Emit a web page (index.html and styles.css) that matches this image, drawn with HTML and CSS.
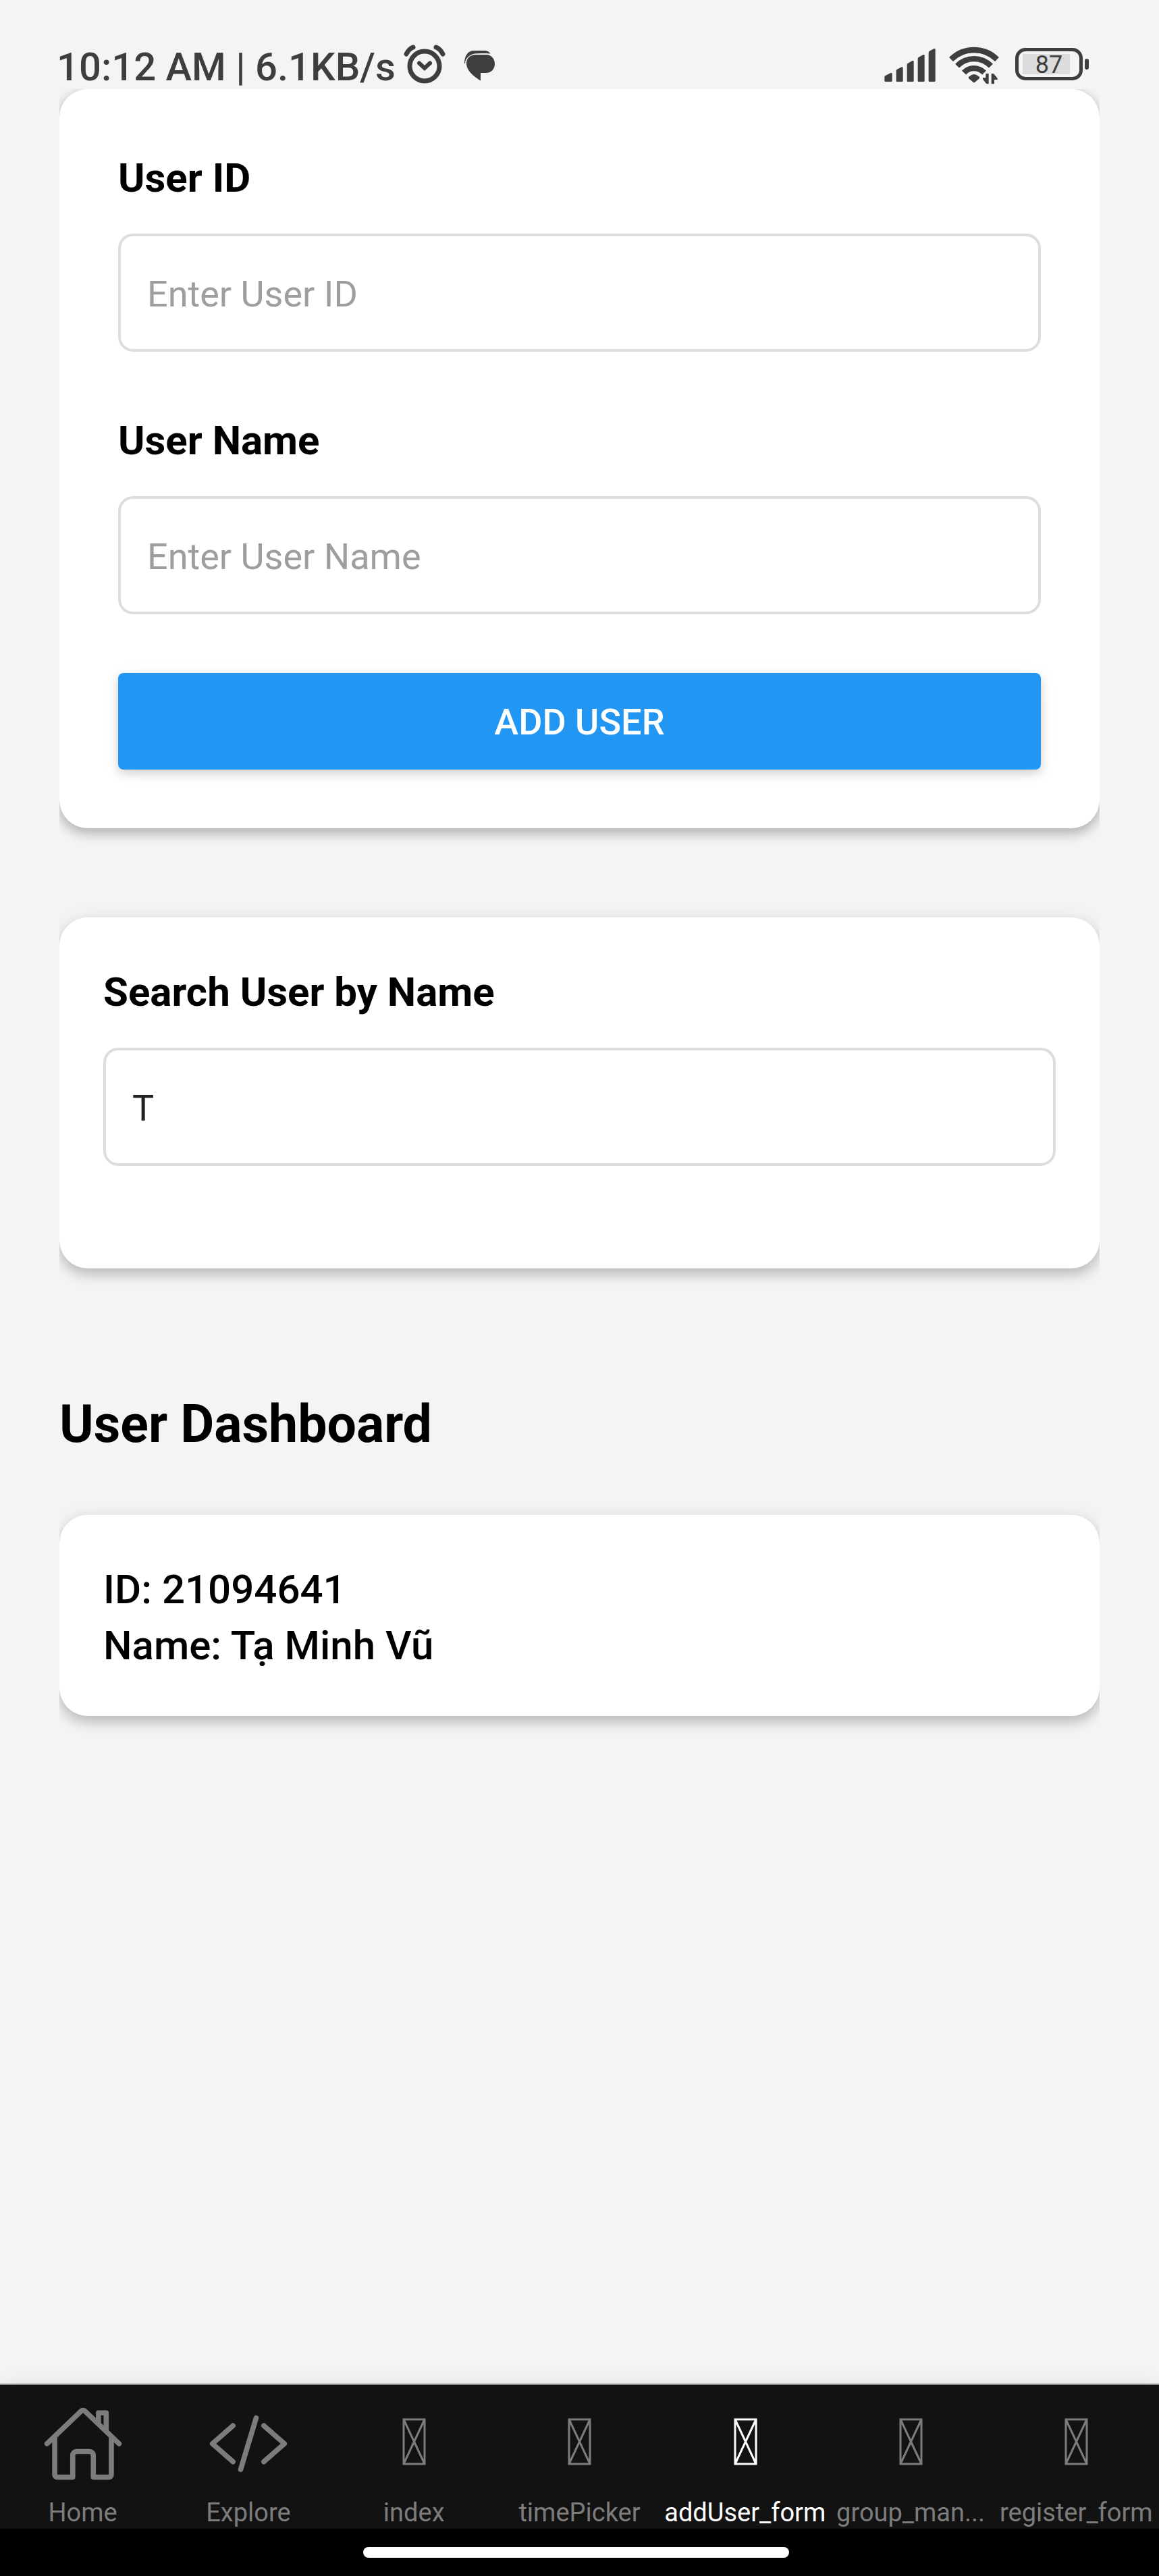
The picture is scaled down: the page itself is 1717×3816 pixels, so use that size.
FILE: index.html
```html
<!DOCTYPE html>
<html lang="en">
<head>
<meta charset="utf-8">
<meta name="viewport" content="width=device-width, initial-scale=1">
<title>Add User</title>
<link rel="stylesheet" href="styles.css">
</head>
<body>
<div class="screen">
  <header class="status">
    <div class="status-group status-left">
      <span class="clock">10:12 AM | 6.1KB/s</span>
      <svg class="icon-alarm" viewBox="0 0 62 58" aria-hidden="true">
        <g fill="none" stroke="currentColor" stroke-linecap="round">
          <circle cx="31" cy="32" r="22" stroke-width="7"/>
          <path d="M23 27.500l8 7.500 8-7.500" stroke-width="6"/>
          <path d="M4 14C6 10 9 6 14 4M58 14C56 10 53 6 48 4" stroke-width="7"/>
        </g>
      </svg>
      <svg class="icon-chat" viewBox="0 0 46 46" aria-hidden="true">
        <path fill="currentColor" d="M17 6h15c8 0 13 6 13 13.500S40 33 32 33h-8v11.500C15 39 3 30 3 19 3 11 9 6 17 6z"/>
        <path fill="currentColor" d="M0 19C0 8 5 0 14 0h15c5 0 8 2 9.500 4.500C28 3.500 21 4 15 4.500 7 6 1 12 1 19z"/>
      </svg>
    </div>
    <div class="status-group status-right">
      <svg class="icon-signal" viewBox="0 0 228 147" aria-hidden="true">
        <g fill="currentColor">
          <path d="M1 143v-17q0-4 4-6l24-12q6-1 6 4v31q0 4-4 4H5q-4 0-4-4z"/>
          <path d="M53 143V98q0-4 4-6l20-10q6-1 6 4v57q0 4-4 4H57q-4 0-4-4z"/>
          <path d="M101 143V72q0-4 4-7l20-11q6-1 6 4v85q0 4-4 4h-22q-4 0-4-4z"/>
          <path d="M149 143V45q0-4 4-7l20-11q6-1 6 4v112q0 4-4 4h-22q-4 0-4-4z"/>
          <path d="M197 143V18q0-4 4-7l20-11q6-1 6 4v139q0 4-4 4h-22q-4 0-4-4z"/>
        </g>
      </svg>
      <svg class="icon-wifi" viewBox="0 0 222 168" aria-hidden="true">
        <g fill="none" stroke="currentColor">
          <path stroke-width="25" d="M9 57C65 1 157 1 213 57"/>
          <path stroke-width="25" d="M36 86C78 44 144 44 186 86"/>
          <path stroke-width="25" d="M66 116C90 90 130 90 156 116"/>
        </g>
        <g fill="currentColor">
          <path d="M88 134q23-22 46 0c2 3 2 6-1 9l-18 15q-4 3-8 0l-18-15c-3-3-3-6-1-9z"/>
          <path d="M163 120h13v46h-7q-3 0-6-4l-13-17v-6h13zM188 166v-46h7q3 0 6 4l14 17v6h-14v19z"/>
        </g>
      </svg>
      <div class="battery"><span class="battery-level">87</span></div>
    </div>
  </header>

  <main class="content">
    <form class="card form-card">
      <label class="label" for="user-id">User ID</label>
      <input class="field" id="user-id" type="text" placeholder="Enter User ID">
      <label class="label" for="user-name">User Name</label>
      <input class="field" id="user-name" type="text" placeholder="Enter User Name">
      <button class="submit" type="button">ADD USER</button>
    </form>

    <section class="card search-card">
      <label class="label" for="search">Search User by Name</label>
      <input class="field" id="search" type="text" value="T">
    </section>

    <h1 class="title">User Dashboard</h1>
    <article class="card user-card">
      <p class="user-line">ID: 21094641</p>
      <p class="user-line">Name: Tạ Minh Vũ</p>
    </article>
  </main>

  <nav class="tabs">
    <a class="tab" href="#home">
      <svg class="tab-icon" viewBox="0 0 512 512" aria-hidden="true"><path d="M80 212v236a16 16 0 0 0 16 16h96V328a24 24 0 0 1 24-24h80a24 24 0 0 1 24 24v136h96a16 16 0 0 0 16-16V212M480 256L266.890 52c-5-5.280-16.690-5.340-21.780 0L32 256M400 179V64h-48v69"/></svg>
      <span class="tab-label">Home</span>
    </a>
    <a class="tab" href="#explore">
      <svg class="tab-icon" viewBox="0 0 512 512" aria-hidden="true"><path d="M160 368L32 256l128-112M352 368l128-112-128-112M304 96l-96 320"/></svg>
      <span class="tab-label">Explore</span>
    </a>
    <a class="tab" href="#index">
      <svg class="tab-icon tab-icon-missing" viewBox="0 0 122 122" aria-hidden="true"><path d="M46 25h31v66H46zl31 66M77 25L46 91"/></svg>
      <span class="tab-label">index</span>
    </a>
    <a class="tab" href="#time-picker">
      <svg class="tab-icon tab-icon-missing" viewBox="0 0 122 122" aria-hidden="true"><path d="M46 25h31v66H46zl31 66M77 25L46 91"/></svg>
      <span class="tab-label">timePicker</span>
    </a>
    <a class="tab tab-active" href="#add-user" aria-current="page">
      <svg class="tab-icon tab-icon-missing" viewBox="0 0 122 122" aria-hidden="true"><path d="M46 25h31v66H46zl31 66M77 25L46 91"/></svg>
      <span class="tab-label">addUser_form</span>
    </a>
    <a class="tab" href="#groups">
      <svg class="tab-icon tab-icon-missing" viewBox="0 0 122 122" aria-hidden="true"><path d="M46 25h31v66H46zl31 66M77 25L46 91"/></svg>
      <span class="tab-label">group_man...</span>
    </a>
    <a class="tab" href="#register">
      <svg class="tab-icon tab-icon-missing" viewBox="0 0 122 122" aria-hidden="true"><path d="M46 25h31v66H46zl31 66M77 25L46 91"/></svg>
      <span class="tab-label">register_form</span>
    </a>
  </nav>
  <footer class="gesture"><div class="gesture-bar"></div></footer>
</div>
</body>
</html>
```
FILE: styles.css
```css
* {
  box-sizing: border-box;
}

body {
  margin: 0;
  background: #f4f4f4;
  color: #000;
  font-family: Roboto, "Noto Sans", sans-serif;
}

.screen {
  display: flex;
  flex-direction: column;
  min-height: 100vh;
}

/* Status bar */
.status {
  display: flex;
  justify-content: space-between;
  height: 132px;
  padding: 62px 104px 0 84px;
  color: #3e3e3e;
}

.status-group {
  display: flex;
  align-items: flex-start;
}

.clock {
  font-size: 58px;
  line-height: 74px;
  font-weight: 500;
  white-space: nowrap;
}

.icon-alarm {
  width: 62px;
  height: 58px;
  margin: 4px 0 0 12px;
}

.icon-chat {
  width: 46px;
  height: 46px;
  margin: 13px 0 0 28px;
}

.icon-signal {
  width: 76px;
  height: 49px;
  margin-top: 10px;
}

.icon-wifi {
  width: 74px;
  height: 56px;
  margin: 7px 0 0 20px;
}

.battery {
  display: flex;
  align-items: center;
  margin: 9px 0 0 24px;
}

.battery-level {
  width: 100px;
  height: 48px;
  border: 5px solid currentColor;
  border-radius: 15px;
  background: linear-gradient(#dcdcdc, #dcdcdc) 6px center / 70px 30px no-repeat;
  font-size: 36px;
  line-height: 40px;
  text-align: center;
}

.battery::after {
  content: "";
  width: 6px;
  height: 16px;
  margin-left: 3px;
  border-radius: 3px;
  background: currentColor;
}

/* Cards */
.content {
  flex: 1;
  padding: 0 88px 88px;
}

.card {
  display: flex;
  flex-direction: column;
  padding: 65px;
  border-radius: 42px;
  background: #fff;
  box-shadow: 0 9px 18px rgba(0, 0, 0, 0.2), 0 4px 36px rgba(0, 0, 0, 0.07);
  clip-path: inset(-20px 0 -60px);
}

.form-card {
  padding: 87px;
  box-shadow: 0 9px 18px rgba(0, 0, 0, 0.2), 0 2px 20px rgba(0, 0, 0, 0.12);
  clip-path: inset(0 0 -60px);
}

.label {
  margin-bottom: 37px;
  font-size: 60px;
  line-height: 90px;
  font-weight: 700;
}

.field {
  width: 100%;
  height: 175px;
  margin-bottom: 87px;
  padding: 3px 39px 0;
  border: 4px solid #ddd;
  border-radius: 22px;
  background: #fff;
  color: #222;
  font-family: inherit;
  font-size: 54px;
}

.field::placeholder {
  color: #9e9e9e;
  opacity: 1;
}

.submit {
  height: 143px;
  padding: 2px 0 0;
  border: 0;
  border-radius: 8px;
  background: #2196f3;
  box-shadow: 0 6px 14px rgba(0, 0, 0, 0.14), 0 4px 28px rgba(0, 0, 0, 0.06);
  color: #fff;
  font-family: inherit;
  font-size: 54px;
  font-weight: 500;
}

.search-card {
  margin-top: 132px;
  padding-top: 66px;
}

.title {
  margin: 187px 0 90px;
  font-size: 77px;
  line-height: 88px;
  font-weight: 700;
}

.user-card {
  padding: 69px 65px 63px;
}

.user-line {
  margin: 0;
  font-size: 60px;
  line-height: 83px;
  font-weight: 500;
}

/* Tab bar */
.tabs {
  display: grid;
  grid-template-columns: repeat(7, minmax(0, 1fr));
  height: 215px;
  padding-top: 26px;
  border-top: 2px solid #888;
  background: #121212;
  box-shadow: 0 0 28px rgba(0, 0, 0, 0.08);
}

.tab {
  display: flex;
  flex-direction: column;
  align-items: center;
  color: #7c7c7c;
  text-decoration: none;
}

.tab-active {
  color: #fff;
}

.tab-icon {
  width: 122px;
  height: 122px;
  fill: none;
  stroke: currentColor;
  stroke-width: 32;
  stroke-linecap: round;
  stroke-linejoin: round;
}

.tab-icon-missing {
  stroke-width: 3;
  stroke-linecap: butt;
  stroke-linejoin: miter;
}

.tab-label {
  margin-top: 18px;
  font-size: 38px;
  line-height: 46px;
  white-space: nowrap;
}

.gesture {
  display: flex;
  justify-content: center;
  height: 70px;
  padding: 27px 10px 0 0;
  background: #000;
}

.gesture-bar {
  width: 37%;
  height: 16px;
  border-radius: 8px;
  background: #fff;
}
```
